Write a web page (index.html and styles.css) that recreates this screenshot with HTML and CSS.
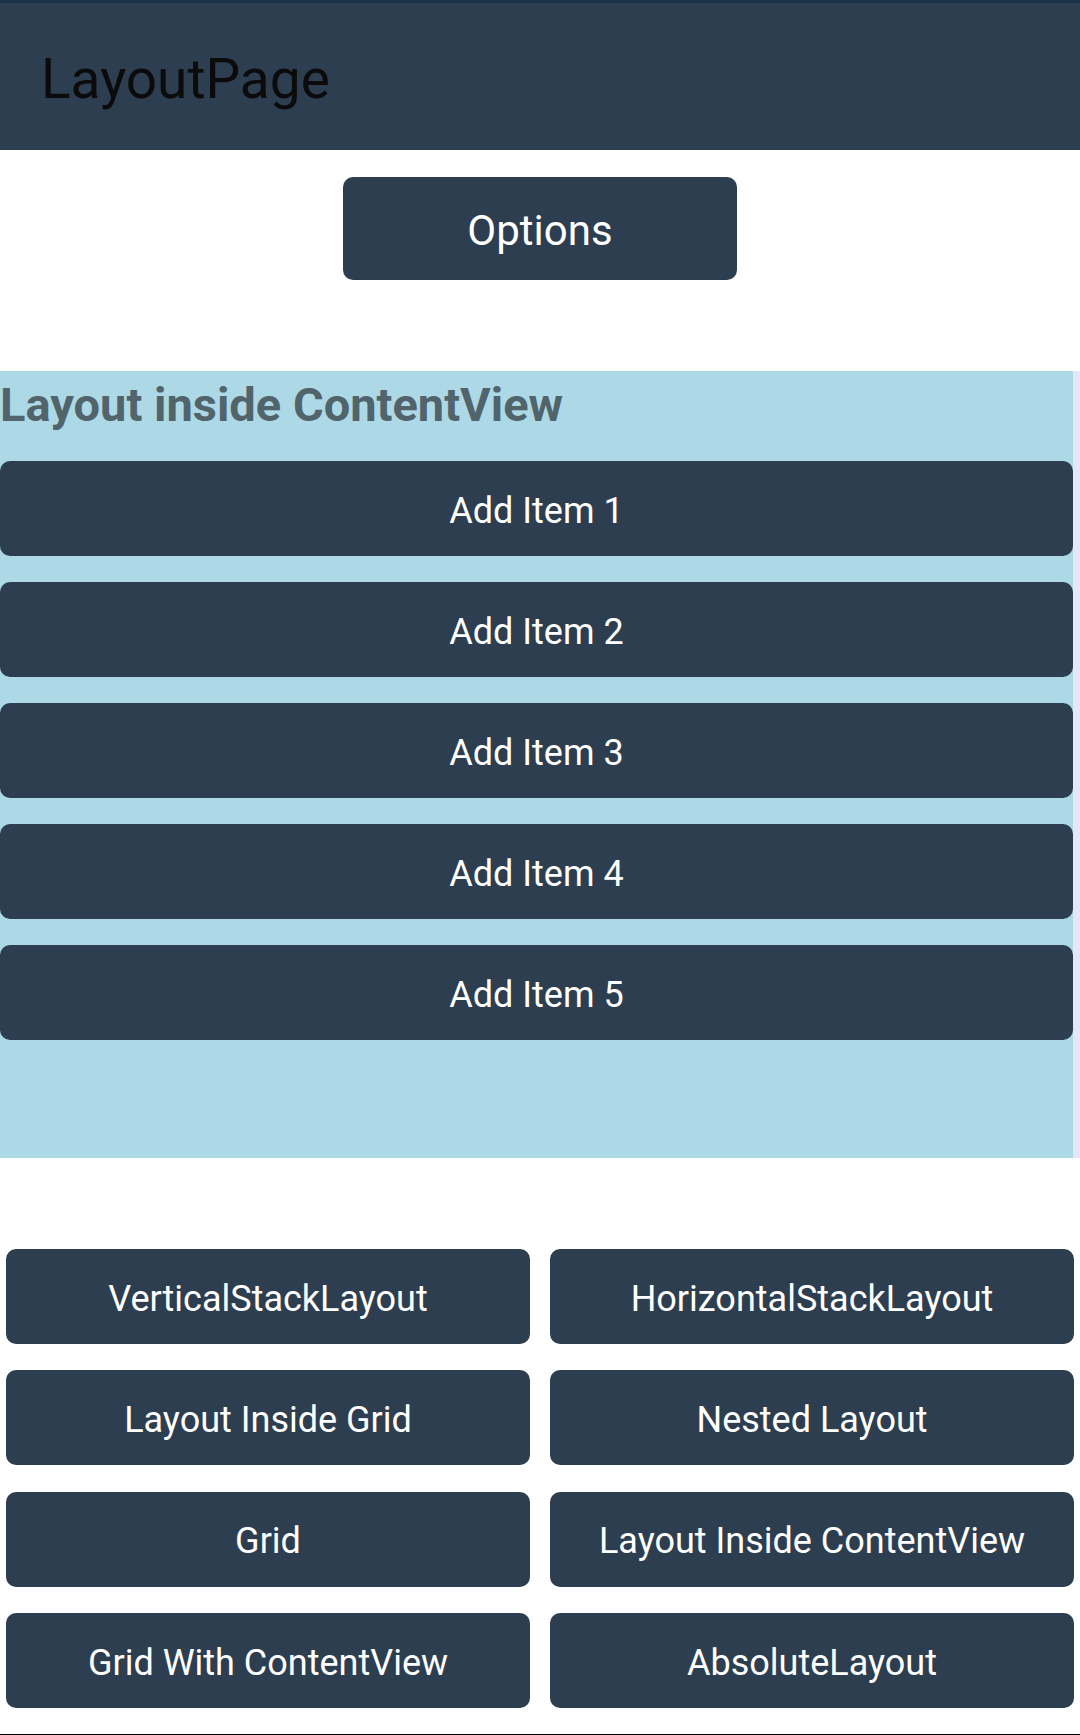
FILE: index.html
```html
<!DOCTYPE html>
<html lang="en">
<head>
<meta charset="utf-8">
<title>LayoutPage</title>
<link rel="stylesheet" href="styles.css">
</head>
<body>
<header class="app-bar">
  <h1 class="app-title">LayoutPage</h1>
</header>
<div class="top">
  <button class="btn btn-options">Options</button>
</div>
<section class="content-view">
  <h2 class="cv-title">Layout inside ContentView</h2>
  <div class="item-list">
    <button class="btn btn-item">Add Item 1</button>
    <button class="btn btn-item">Add Item 2</button>
    <button class="btn btn-item">Add Item 3</button>
    <button class="btn btn-item">Add Item 4</button>
    <button class="btn btn-item">Add Item 5</button>
  </div>
</section>
<nav class="nav-grid">
  <button class="btn btn-nav">VerticalStackLayout</button>
  <button class="btn btn-nav">HorizontalStackLayout</button>
  <button class="btn btn-nav">Layout Inside Grid</button>
  <button class="btn btn-nav">Nested Layout</button>
  <button class="btn btn-nav">Grid</button>
  <button class="btn btn-nav">Layout Inside ContentView</button>
  <button class="btn btn-nav">Grid With ContentView</button>
  <button class="btn btn-nav">AbsoluteLayout</button>
</nav>
<div class="bottom-line"></div>
</body>
</html>
```
FILE: styles.css
```css
html, body {
  margin: 0;
  padding: 0;
  background: #ffffff;
}
body {
  font-family: Roboto, "Noto Sans", "Liberation Sans", sans-serif;
  width: 1080px;
  height: 1735px;
  overflow: hidden;
}
.app-bar {
  box-sizing: border-box;
  height: 150px;
  background: #2d3e50;
  border-top: 3px solid #1e3247;
  padding: 44px 0 0 41px;
}
.app-title {
  margin: 0;
  font-size: 55px;
  font-weight: 400;
  line-height: 64px;
  color: #0b0b0b;
}
.top {
  display: flex;
  justify-content: center;
  padding: 27px 0 91px;
}
.btn {
  box-sizing: border-box;
  display: flex;
  align-items: center;
  justify-content: center;
  border: none;
  margin: 0;
  padding: 4px 0 0 0;
  background: #2d3e50;
  color: #ffffff;
  font-family: Roboto, "Noto Sans", "Liberation Sans", sans-serif;
  font-weight: 400;
  border-radius: 10px;
  cursor: pointer;
}
.btn-options {
  width: 394px;
  height: 103px;
  font-size: 42px;
}
.content-view {
  box-sizing: border-box;
  height: 787px;
  background: #add8e6;
  border-right: 7px solid #e6e6fa;
  padding-top: 7px;
}
.cv-title {
  margin: 0 0 29px 0;
  font-size: 47px;
  font-weight: 700;
  line-height: 54px;
  color: #51646c;
}
.item-list {
  display: flex;
  flex-direction: column;
  gap: 26px;
}
.btn-item {
  width: 100%;
  height: 95px;
  font-size: 36px;
}
.nav-grid {
  margin-top: 91px;
  padding: 0 6px;
  display: grid;
  grid-template-columns: 1fr 1fr;
  column-gap: 20px;
  row-gap: 26.4px;
}
.btn-nav {
  height: 95px;
  font-size: 36px;
}
.bottom-line {
  margin-top: 26px;
  height: 1px;
  background: #000000;
}
```
